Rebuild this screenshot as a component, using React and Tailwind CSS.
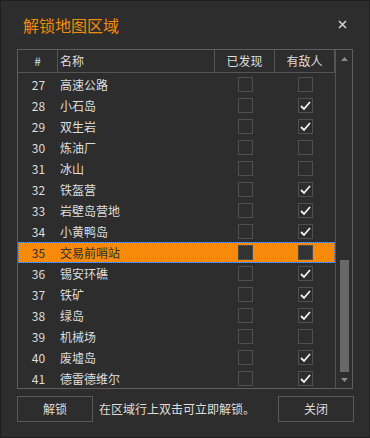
const rows = [
  { id: 27, name: '高速公路', found: false, enemy: false },
  { id: 28, name: '小石岛', found: false, enemy: true },
  { id: 29, name: '双生岩', found: false, enemy: true },
  { id: 30, name: '炼油厂', found: false, enemy: false },
  { id: 31, name: '冰山', found: false, enemy: false },
  { id: 32, name: '铁盔营', found: false, enemy: true },
  { id: 33, name: '岩壁岛营地', found: false, enemy: true },
  { id: 34, name: '小黄鸭岛', found: false, enemy: true },
  { id: 35, name: '交易前哨站', found: false, enemy: false, selected: true },
  { id: 36, name: '锡安环礁', found: false, enemy: true },
  { id: 37, name: '铁矿', found: false, enemy: true },
  { id: 38, name: '绿岛', found: false, enemy: true },
  { id: 39, name: '机械场', found: false, enemy: false },
  { id: 40, name: '废墟岛', found: false, enemy: true },
  { id: 41, name: '德雷德维尔', found: false, enemy: true },
]

function CheckBox({ checked, selected }) {
  return (
    <div
      className={
        'w-[15px] h-[15px] border flex items-center justify-center ' +
        (selected ? 'border-[#4a4a4a] bg-[#333333]' : 'border-[#4f4f4f]')
      }
    >
      {checked && (
        <svg width="13" height="13" viewBox="0 0 13 13">
          <polyline points="2,7 5,10 11,3" fill="none" stroke="#f2f2f2" strokeWidth="1.8" />
        </svg>
      )}
    </div>
  )
}

export default function App() {
  return (
    <div
      className="w-[370px] h-[438px] bg-[#2d2d2d] border border-[#1f1f1f] flex flex-col text-[12px] text-[#dedede]"
      style={{ fontFamily: '"Noto Sans CJK SC", "Noto Sans", sans-serif' }}
    >
      {/* title bar */}
      <div className="h-[48px] flex items-center justify-between pl-[22px] pr-[22px] pb-[1px]">
        <span className="text-[16px] text-[#f08c0a] leading-none">解锁地图区域</span>
        <svg width="9" height="9" viewBox="0 0 9 9">
          <path d="M1 1 L8 8 M8 1 L1 8" stroke="#cfcfcf" strokeWidth="1.6" />
        </svg>
      </div>

      {/* table */}
      <div className="ml-[16px] w-[336px] h-[340px] border border-[#5e5e5e] flex overflow-hidden">
        <div className="w-[317px] flex flex-col">
          <div className="h-[23px] flex border-b border-[#555555] shrink-0">
            <div className="w-[40px] border-r border-[#555555] flex items-center justify-center">#</div>
            <div className="w-[157px] border-r border-[#555555] flex items-center pl-[2px]">名称</div>
            <div className="w-[60px] border-r border-[#555555] flex items-center justify-center">已发现</div>
            <div className="w-[60px] border-r border-[#555555] flex items-center justify-center">有敌人</div>
          </div>
          <div className="pt-[1px] flex flex-col">
            {rows.map((r) => (
              <div
                key={r.id}
                className={
                  'h-[21px] shrink-0 flex items-center ' +
                  (r.selected
                    ? 'bg-[#f7890b] text-[#2e2e2e] outline outline-1 outline-dotted outline-[#2f73d6] -outline-offset-1'
                    : '')
                }
              >
                <div className="w-[40px] text-center pl-[1px]">{r.id}</div>
                <div className="w-[157px] pl-[2px]">{r.name}</div>
                <div className="w-[60px] flex justify-center">
                  <CheckBox checked={r.found} selected={r.selected} />
                </div>
                <div className="w-[60px] flex justify-center">
                  <CheckBox checked={r.enemy} selected={r.selected} />
                </div>
              </div>
            ))}
          </div>
        </div>

        {/* scrollbar */}
        <div className="w-[17px] border-l border-[#555555] flex flex-col">
          <div className="h-[17px] flex items-center justify-center shrink-0">
            <svg width="7" height="4" viewBox="0 0 7 4">
              <polygon points="3.5,0 7,4 0,4" fill="#8a8a8a" />
            </svg>
          </div>
          <div className="flex-1 flex flex-col justify-end items-center">
            <div className="w-[9px] h-[112px] bg-[#686868]" />
          </div>
          <div className="h-[16px] flex items-center justify-center shrink-0">
            <svg width="7" height="4" viewBox="0 0 7 4">
              <polygon points="0,0 7,0 3.5,4" fill="#8a8a8a" />
            </svg>
          </div>
        </div>
      </div>

      {/* footer */}
      <div className="mt-[7px] ml-[16px] w-[337px] flex items-center">
        <button className="w-[76px] h-[26px] border border-[#5a5a5a] text-[#dedede]">解锁</button>
        <span className="ml-[6px] flex-1">在区域行上双击可立即解锁。</span>
        <button className="w-[76px] h-[26px] border border-[#5a5a5a] text-[#dedede]">关闭</button>
      </div>
    </div>
  )
}
